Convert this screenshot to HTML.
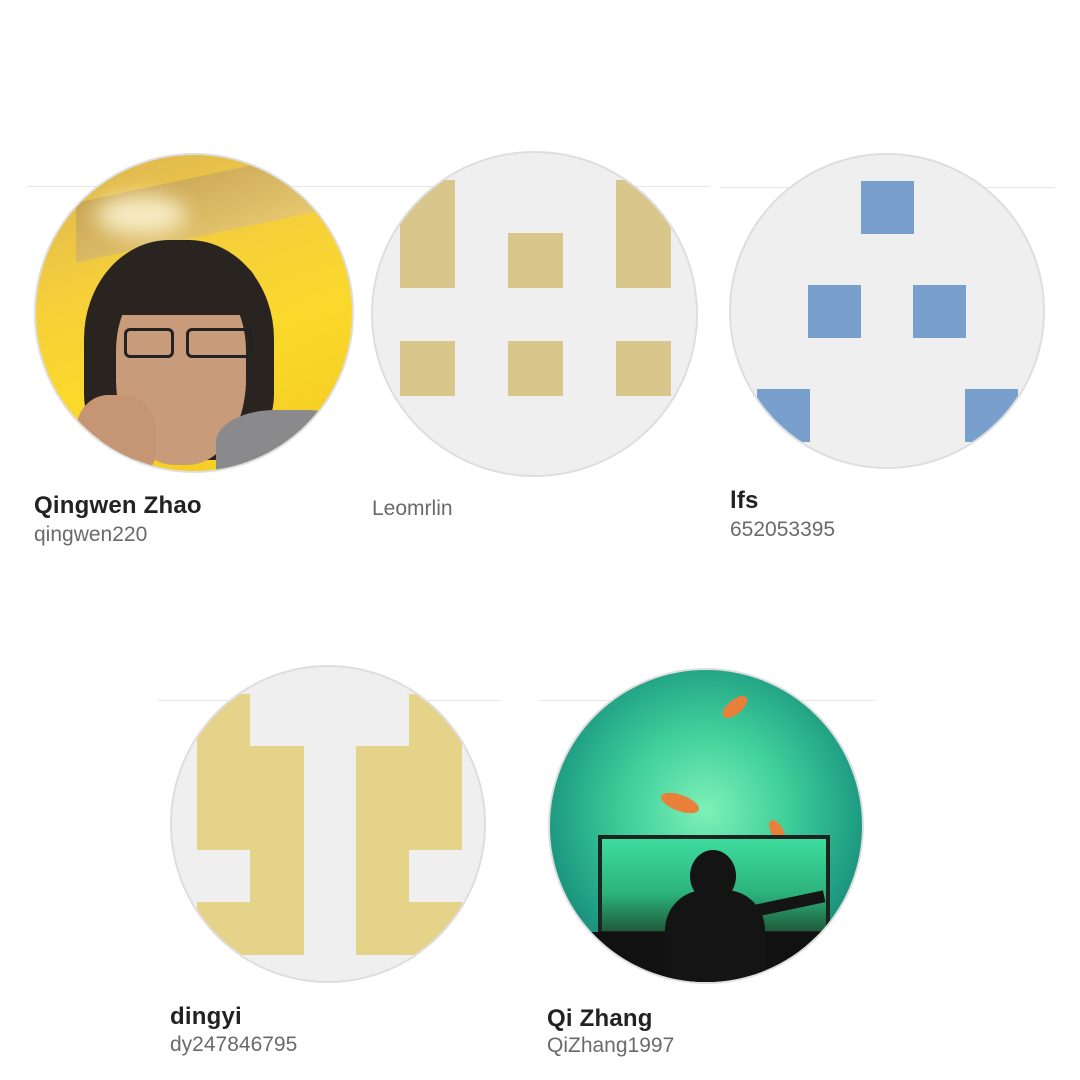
<!DOCTYPE html>
<html><head><meta charset="utf-8"><style>
*{margin:0;padding:0;box-sizing:border-box}
html,body{width:1080px;height:1080px;background:#fff;overflow:hidden;position:relative;font-family:"Liberation Sans",sans-serif}
.ln{position:absolute;height:1px;background:#e6e6e6}
.c{position:absolute;border-radius:50%;overflow:hidden;background:#efefef;border:2px solid #dedede}
.b{position:absolute}
.n{position:absolute;font-weight:bold;font-size:24px;letter-spacing:0.2px;color:#222}
.u{position:absolute;font-size:21px;color:#6a6a6a}
</style></head><body>
<div class="ln" style="left:28px;top:186px;width:682px"></div>
<div class="ln" style="left:720px;top:187px;width:335px"></div>
<div class="ln" style="left:158px;top:700px;width:342px"></div>
<div class="ln" style="left:540px;top:700px;width:335px"></div>

<div class="c" style="left:34px;top:153px;width:320px;height:320px;background:linear-gradient(160deg,#d8b25a 0%,#f5cf3a 35%,#fbd92c 60%,#f3c920 100%)">
  <div class="b" style="left:40px;top:20px;width:260px;height:60px;background:linear-gradient(170deg,#c9a655,#e8c870);transform:skewY(-12deg)"></div>
  <div class="b" style="left:60px;top:40px;width:90px;height:40px;border-radius:50%;background:rgba(255,250,220,.8);filter:blur(10px)"></div>
  <div class="b" style="left:48px;top:85px;width:190px;height:220px;border-radius:45% 45% 30% 30%;background:#2a2420"></div>
  <div class="b" style="left:80px;top:120px;width:130px;height:190px;border-radius:40% 40% 45% 45%;background:#c89b7a"></div>
  <div class="b" style="left:70px;top:95px;width:150px;height:65px;border-radius:50% 50% 10% 10%;background:#2a2420"></div>
  <div class="b" style="left:88px;top:173px;width:50px;height:30px;border:3px solid #222;border-radius:6px"></div>
  <div class="b" style="left:150px;top:173px;width:66px;height:30px;border:3px solid #222;border-radius:6px"></div>
  <div class="b" style="left:180px;top:255px;width:150px;height:80px;border-radius:40% 40% 0 0;background:#8a8a8c"></div>
  <div class="b" style="left:40px;top:240px;width:80px;height:90px;border-radius:40%;background:#c69574"></div>
</div>

<div class="c" style="left:371px;top:151px;width:327px;height:326px">
  <div class="b" style="left:27px;top:27px;width:55px;height:108px;background:#d9c68b"></div>
  <div class="b" style="left:135px;top:80px;width:55px;height:55px;background:#d9c68b"></div>
  <div class="b" style="left:243px;top:27px;width:55px;height:108px;background:#d9c68b"></div>
  <div class="b" style="left:27px;top:188px;width:55px;height:55px;background:#d9c68b"></div>
  <div class="b" style="left:135px;top:188px;width:55px;height:55px;background:#d9c68b"></div>
  <div class="b" style="left:243px;top:188px;width:55px;height:55px;background:#d9c68b"></div>
</div>

<div class="c" style="left:729px;top:153px;width:316px;height:316px">
  <div class="b" style="left:130px;top:26px;width:53px;height:53px;background:#799fcd"></div>
  <div class="b" style="left:77px;top:130px;width:53px;height:53px;background:#799fcd"></div>
  <div class="b" style="left:182px;top:130px;width:53px;height:53px;background:#799fcd"></div>
  <div class="b" style="left:26px;top:234px;width:53px;height:53px;background:#799fcd"></div>
  <div class="b" style="left:234px;top:234px;width:53px;height:53px;background:#799fcd"></div>
</div>

<div class="c" style="left:170px;top:665px;width:316px;height:318px">
  <div class="b" style="left:25px;top:27px;width:53px;height:156px;background:#e5d38a"></div>
  <div class="b" style="left:78px;top:79px;width:54px;height:209px;background:#e5d38a"></div>
  <div class="b" style="left:25px;top:235px;width:53px;height:53px;background:#e5d38a"></div>
  <div class="b" style="left:237px;top:27px;width:53px;height:156px;background:#e5d38a"></div>
  <div class="b" style="left:184px;top:79px;width:53px;height:209px;background:#e5d38a"></div>
  <div class="b" style="left:237px;top:235px;width:53px;height:53px;background:#e5d38a"></div>
</div>

<div class="c" style="left:548px;top:668px;width:316px;height:316px;background:radial-gradient(circle at 50% 45%,#7ef0b8 0%,#3fcf9a 35%,#1f9e84 65%,#135f5a 100%)">
  <div class="b" style="left:170px;top:30px;width:30px;height:14px;border-radius:50%;background:#e8803a;transform:rotate(-40deg)"></div>
  <div class="b" style="left:110px;top:125px;width:40px;height:16px;border-radius:50%;background:#e8803a;transform:rotate(20deg)"></div>
  <div class="b" style="left:215px;top:155px;width:24px;height:12px;border-radius:50%;background:#e8803a;transform:rotate(60deg)"></div>
  <div class="b" style="left:48px;top:165px;width:232px;height:100px;border:4px solid #1c2420;background:linear-gradient(#3edc9e,#2bb27a 60%,#1f5a3a)"></div>
  <div class="b" style="left:30px;top:262px;width:260px;height:60px;background:#111"></div>
  <div class="b" style="left:140px;top:180px;width:46px;height:52px;border-radius:50%;background:#141414"></div>
  <div class="b" style="left:115px;top:220px;width:100px;height:100px;border-radius:40% 40% 0 0;background:#141414"></div>
  <div class="b" style="left:200px;top:228px;width:75px;height:12px;background:#141414;transform:rotate(-12deg)"></div>
</div>

<div class="n" style="left:34px;top:492px">Qingwen Zhao</div>
<div class="u" style="left:34px;top:523px">qingwen220</div>
<div class="u" style="left:372px;top:497px">Leomrlin</div>
<div class="n" style="left:730px;top:487px">lfs</div>
<div class="u" style="left:730px;top:518px">652053395</div>
<div class="n" style="left:170px;top:1003px">dingyi</div>
<div class="u" style="left:170px;top:1033px">dy247846795</div>
<div class="n" style="left:547px;top:1005px">Qi Zhang</div>
<div class="u" style="left:547px;top:1034px">QiZhang1997</div>
</body></html>
